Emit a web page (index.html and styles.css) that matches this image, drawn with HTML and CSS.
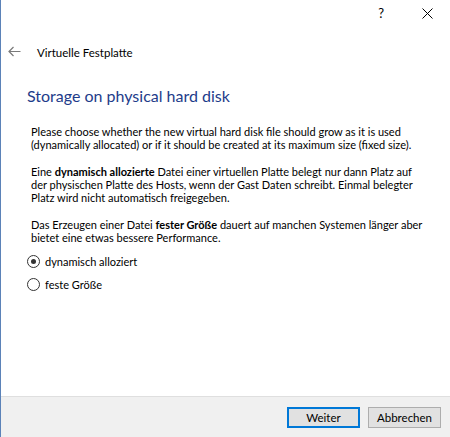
FILE: index.html
```html
<!DOCTYPE html>
<html lang="de">
<head>
    <meta charset="UTF-8">
    <title>Virtuelle Festplatte</title>
    <link rel="stylesheet" href="styles.css">
</head>
<body>
    <div class="window">
        <div class="titlebar">
            <span class="help">?</span>
            <span class="close">
                <svg width="11" height="11" viewBox="0 0 11 11">
                    <path d="M0.5 0.5 L10.5 10.5 M10.5 0.5 L0.5 10.5" stroke="#000" stroke-width="1" fill="none"/>
                </svg>
            </span>
        </div>

        <div class="navbar">
            <svg class="back" width="13" height="11" viewBox="0 0 13 11">
                <path d="M1 5.5 H12.5 M5.5 1 L1 5.5 L5.5 10" stroke="#7a7a7a" stroke-width="1.2" fill="none"/>
            </svg>
            <span class="navtitle">Virtuelle Festplatte</span>
        </div>

        <div class="content">
            <h1 class="heading">Storage on physical hard disk</h1>
            <p>Please choose whether the new virtual hard disk file should grow as it is used<br>(dynamically allocated) or if it should be created at its maximum size (fixed size).</p>
            <p>Eine <b>dynamisch allozierte</b> Datei einer virtuellen Platte belegt nur dann Platz auf<br>der physischen Platte des Hosts, wenn der Gast Daten schreibt. Einmal belegter<br>Platz wird nicht automatisch freigegeben.</p>
            <p class="last">Das Erzeugen einer Datei <b>fester Größe</b> dauert auf manchen Systemen länger aber<br>bietet eine etwas bessere Performance.</p>

            <label class="radio"><span class="dot checked"></span>dynamisch alloziert</label>
            <label class="radio"><span class="dot"></span>feste Größe</label>
        </div>

        <div class="footer">
            <button class="btn default">Weiter</button>
            <button class="btn">Abbrechen</button>
        </div>
    </div>
</body>
</html>
```

FILE: styles.css
```css
body {
    margin: 0;
    padding: 0;
    background-color: #fff;
    font-family: Lato, "Open Sans", sans-serif;
    font-size: 11px;
    color: #000;
}
.window {
    width: 450px;
    height: 437px;
    border-left: 1px solid #5b82b8;
    display: flex;
    flex-direction: column;
    box-sizing: border-box;
}
.titlebar {
    height: 28px;
    display: flex;
    align-items: center;
    justify-content: flex-end;
    padding-right: 17px;
}
.help {
    font-size: 13px;
    margin-right: 38px;
    margin-top: -2px;
}
.close {
    display: flex;
    margin-top: -2px;
}
.navbar {
    height: 48px;
    display: flex;
    align-items: center;
    padding-left: 7px;
}
.back {
    margin-right: 16px;
    margin-top: -1px;
}
.navtitle {
    margin-top: 1px;
    font-size: 11.5px;
}
.content {
    padding: 10px 20px 0 25px;
}
.heading {
    margin: 0 0 19px 1px;
    font-size: 16px;
    font-weight: normal;
    color: #1e3c8a;
    line-height: 20px;
}
p {
    margin: 0 0 14px 5px;
    line-height: 13px;
    white-space: nowrap;
}
p.last {
    margin-bottom: 6px;
}
.radio {
    display: flex;
    align-items: center;
    height: 23px;
    margin-left: 1px;
}
.dot {
    width: 11px;
    height: 11px;
    border: 1px solid #333;
    border-radius: 50%;
    margin-right: 5px;
    position: relative;
    box-sizing: content-box;
}
.dot.checked::after {
    content: "";
    position: absolute;
    left: 3px;
    top: 3px;
    width: 5px;
    height: 5px;
    border-radius: 50%;
    background-color: #333;
}
.footer {
    margin-top: auto;
    height: 40px;
    border-top: 1px solid #dfdfdf;
    background-color: #f0f0f0;
    display: flex;
    align-items: center;
    justify-content: flex-end;
    padding-right: 9px;
    gap: 8px;
}
.btn {
    font-family: Lato, "Open Sans", sans-serif;
    font-size: 11.5px;
    width: 73px;
    height: 21px;
    padding: 0;
    background-color: #e1e1e1;
    border: 1px solid #adadad;
    color: #000;
}
.btn.default {
    border: 2px solid #0078d7;
}
```
